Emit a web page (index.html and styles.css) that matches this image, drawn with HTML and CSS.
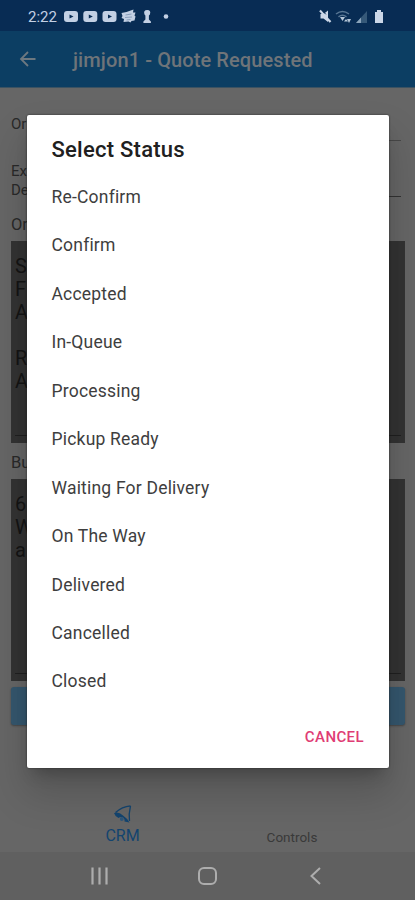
FILE: index.html
```html
<!DOCTYPE html>
<html lang="en">
<head>
<meta charset="utf-8">
<title>Select Status</title>
<link rel="stylesheet" href="styles.css">
</head>
<body>
<div class="phone">
  <div class="statusbar">
    <span class="time">2:22</span>
    <svg class="tray" width="110" height="18" viewBox="0 0 110 18">
      <g fill="#c3d0e4">
        <rect x="0" y="3" width="14" height="11" rx="3"/>
        <rect x="19.3" y="3" width="14" height="11" rx="3"/>
        <rect x="38.5" y="3" width="14" height="11" rx="3"/>
        <path d="M57.500 5l5-1 7-2.500-.5 3h2.500l-1 3 1 1-1 4-3 .5-1 1.500-2-1-5 .5.500-3-2.500-1 1-2z"/>
        <path d="M80.500 6.500q-1.500-4.500 2.700-4.500t2.700 4.500l-1 1v4l2 2v1.500h-7.500v-1.500l2-2v-4z"/>
        <circle cx="102" cy="8.500" r="2.300"/>
      </g>
      <g fill="#082c54"><path d="M5.500 6.500l4 2-4 2zM24.800 6.500l4 2-4 2zM44 6.500l4 2-4 2z"/></g>
      <path d="M61.500 7l6-1M61 9.500l7-.5M62.500 12l4-.5" stroke="#7890b0" stroke-width=".8" fill="none"/>
    </svg>
    <svg class="signals" width="68" height="18" viewBox="0 0 68 18">
      <path d="M2.500 6h3l4.500-3.500v11.500l-4.500-3.500h-3z" fill="#cbd7e8"/>
      <path d="M2 2.500l10.500 11.500" stroke="#cbd7e8" stroke-width="2.200"/>
      <path d="M3.800 2l4 4.300" stroke="#082c54" stroke-width="1"/>
      <path d="M57 4h2V2h4v2h2v11h-8z" fill="#cbd7e8"/>
      <g fill="none" stroke="#597794" stroke-width="1.500"><path d="M18 6q6.500-5 13 0M20.500 8.800q4-3 8 0"/></g>
      <path d="M22 9h5l-2.500 4zM26 13.500l2-2.500 2 2.500zM29 11h4l-2 4z" fill="#b4c5d7"/>
      <path d="M38 15L49 3v12z" fill="#365979"/><path d="M38 15l5-5.500V15z" fill="#8ba4bb"/>
    </svg>
  </div>
  <header class="appbar">
    <svg class="back" width="18" height="18" viewBox="0 0 18 18"><path d="M16.500 9H2M9 2L2 9l7 7" fill="none" stroke="#6d7880" stroke-width="1.800"/></svg>
    <h1>jimjon1 - Quote Requested</h1>
  </header>
  <main class="form">
    <div class="field first"><label>Or</label><span class="input"></span></div>
    <div class="field second"><label>Ex<br>De</label><span class="input"></span></div>
    <div class="caption">Or</div>
    <div class="area order">S<br>F<br>A<br><br>R<br>A</div>
    <div class="caption mid">Bu</div>
    <div class="area business">6<br>W<br>a</div>
    <div class="button"></div>
  </main>
  <nav class="tabs">
    <div class="tab active">
      <svg width="20" height="20" viewBox="0 0 20 20"><path d="M17.500 1.800Q9 2.500 2.500 8.500M17.500 1.800Q15.500 10 16.500 17" fill="none" stroke="#13446f" stroke-width="1.300"/><path d="M1 9q4.500-2 9 2.500 5 3.500 6.500 7l-5-1q.5-3.500-2.500-4.500-2-.3-3.500 1Q2 12.500 1 9z" fill="#13446f"/><circle cx="8.800" cy="15" r="1.900" fill="#2d5679"/></svg>
      <span>CRM</span>
    </div>
    <div class="tab"><span>Controls</span></div>
  </nav>
  <footer class="navkeys">
    <svg width="415" height="48" viewBox="0 0 415 48" fill="none" stroke="#adadad">
      <path d="M92.500 15.500v17M99.500 15.500v17M106.500 15.500v17" stroke-width="2.200"/>
      <rect x="199" y="16" width="17" height="16" rx="5" stroke-width="2"/>
      <path d="M320 16l-8.500 8 8.500 8" stroke-width="2"/>
    </svg>
  </footer>
  <section class="dialog">
    <h2>Select Status</h2>
    <ul>
      <li>Re-Confirm</li>
      <li>Confirm</li>
      <li>Accepted</li>
      <li>In-Queue</li>
      <li>Processing</li>
      <li>Pickup Ready</li>
      <li>Waiting For Delivery</li>
      <li>On The Way</li>
      <li>Delivered</li>
      <li>Cancelled</li>
      <li>Closed</li>
    </ul>
    <div class="actions">CANCEL</div>
  </section>
</div>
</body>
</html>
```
FILE: styles.css
```css
* { box-sizing: border-box; }
body { margin: 0; font-family: Roboto, sans-serif; background: #666; }
.phone { position: relative; width: 415px; height: 900px; overflow: hidden; display: flex; flex-direction: column; background: #666; }
.statusbar { height: 31px; flex: none; background: #082c54; display: flex; align-items: center; padding: 2px 29px 0 28px; }
.time { width: 36px; font-size: 15px; color: #c3d0e4; line-height: 18px; }
.signals { margin-left: auto; }
.appbar { height: 57px; flex: none; background: #0c3e63; border-bottom: 1px solid #3b5262; display: flex; align-items: center; padding: 0 0 1px 19px; }
.back { margin-right: 36px; }
.appbar h1 { margin: 2px 0 0; font-size: 20px; font-weight: 500; color: #6f7479; letter-spacing: .1px; white-space: nowrap; }
.form { flex: none; height: 708px; padding: 25px 10px 0 11px; color: #292929; }
.field { display: flex; margin-right: 4px; font-size: 15px; line-height: 19px; }
.field label { width: 130px; }
.input { flex: 1; border-bottom: 1px solid #484848; }
.first { height: 28px; }
.first label { padding-top: 2px; }
.second { height: 56px; }
.second label { padding-top: 21px; }
.second .input { border-color: #333; }
.caption { height: 44px; padding-top: 18px; font-size: 16.500px; line-height: 19px; }
.mid { height: 36px; padding-top: 10px; }
.area { height: 202px; background: #333; padding: 14px 4px 0; font-size: 20px; line-height: 23px; color: #151515; display: flow-root; position: relative; }
.area::after { content: ""; position: absolute; left: 4px; right: 4px; bottom: 7px; height: 1px; background: #202020; }
.button { height: 38px; margin-top: 6px; background: #35576e; border-radius: 3px; box-shadow: 0 1px 2px #444; }
.tabs { height: 56px; flex: none; display: grid; grid-template-columns: 245px 94px; color: #393939; font-size: 13.500px; }
.tab { display: flex; flex-direction: column; align-items: center; justify-content: flex-end; padding-bottom: 7px; line-height: 16px; }
.active { color: #13446f; font-size: 16px; padding-bottom: 8px; }
.active svg { margin-bottom: 4px; }
.navkeys { height: 48px; flex: none; background: #606060; }
.dialog { position: absolute; left: 27px; top: 115px; width: 362px; height: 653px; padding: 22px 25px 0 24.500px; background: #fff; border-radius: 2px; box-shadow: 0 0 2px #222, 0 11px 15px -7px rgba(0,0,0,.25), 0 24px 38px 3px rgba(0,0,0,.16); }
.dialog h2 { margin: 0; height: 36px; font-size: 22px; font-weight: 500; line-height: 26px; color: #202020; letter-spacing: .25px; }
.dialog ul { margin: 0; padding: 0; list-style: none; font-size: 17.500px; color: #3e3e3e; letter-spacing: .2px; }
.dialog li { height: 48.450px; line-height: 48.500px; }
.actions { text-align: right; margin-top: 21px; font-size: 15px; font-weight: 500; line-height: 20px; color: #df3c74; letter-spacing: .4px; }
```
